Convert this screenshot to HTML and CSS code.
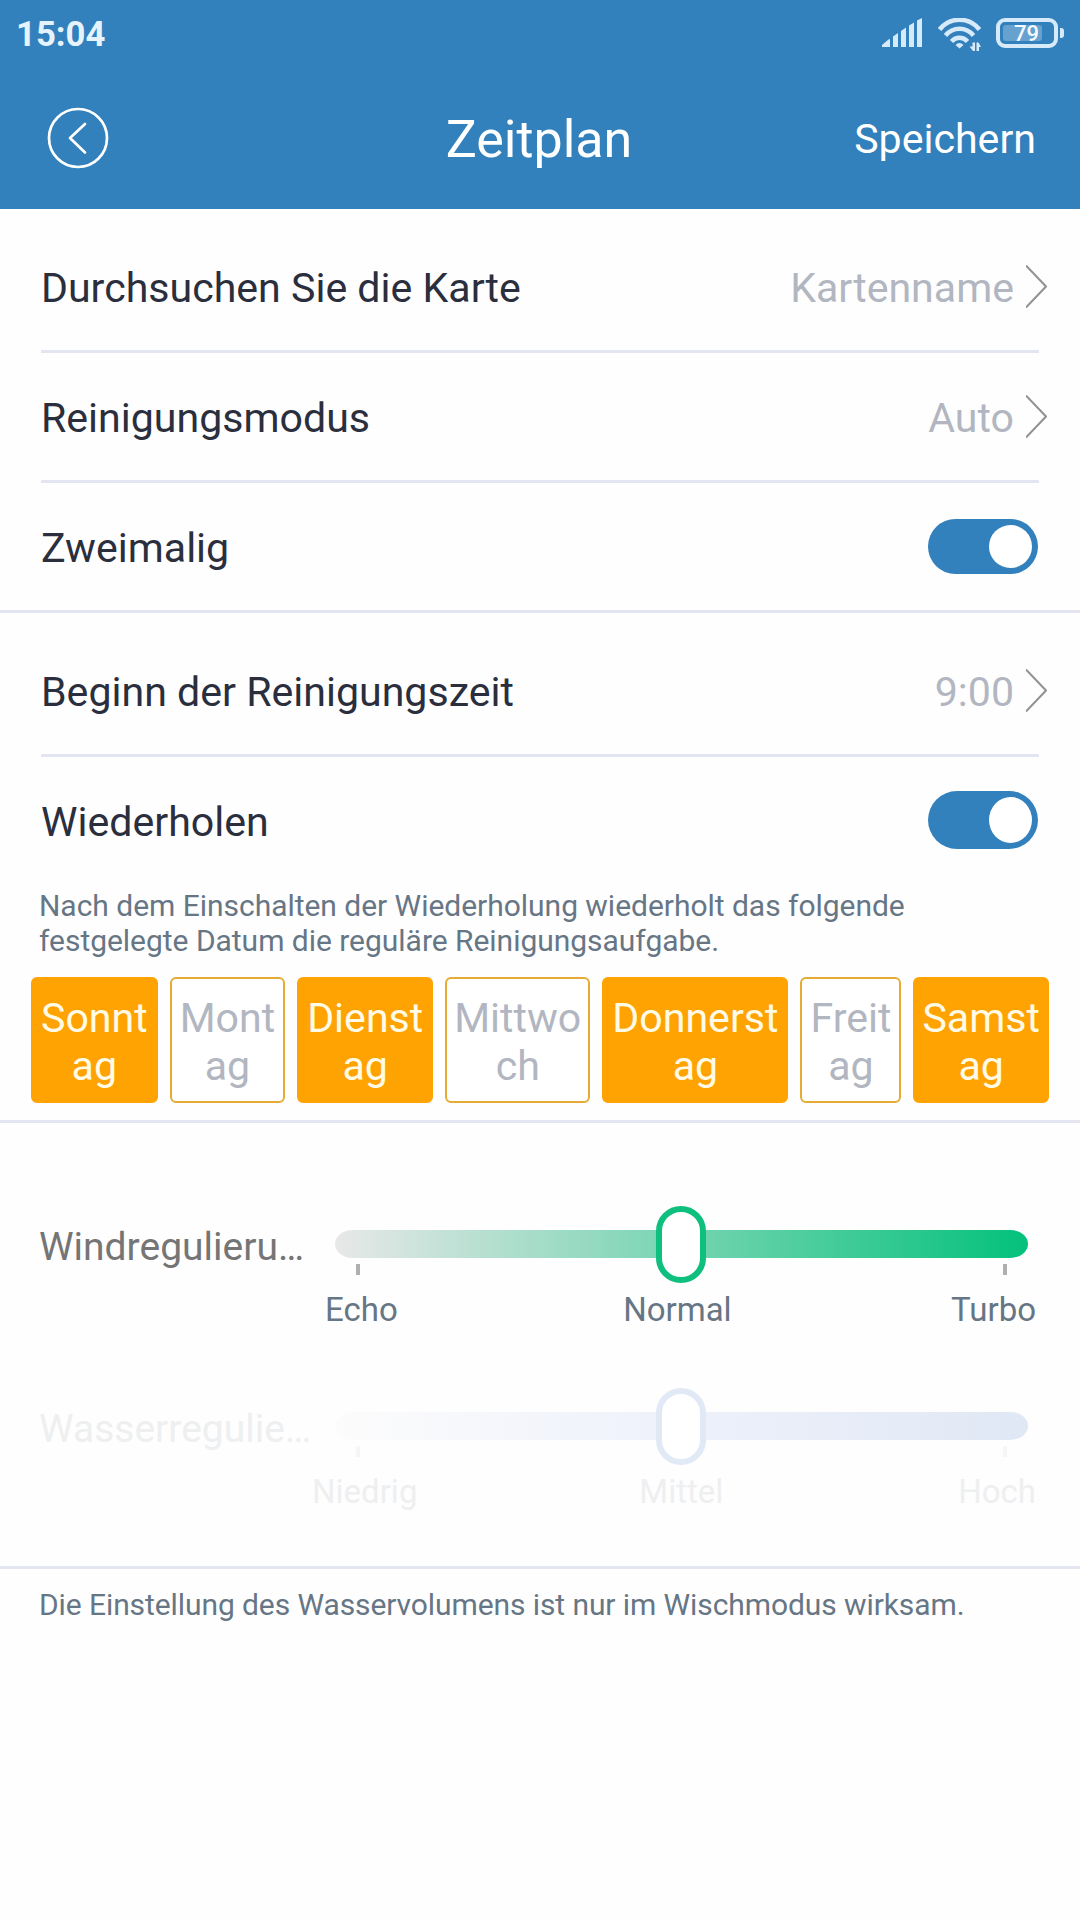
FILE: index.html
```html
<!DOCTYPE html>
<html lang="de">
<head>
<meta charset="utf-8">
<title>Zeitplan</title>
<link rel="stylesheet" href="styles.css">
</head>
<body>
<header class="header">
  <div class="statusbar">
    <span class="clock">15:04</span>
    <div class="status-icons">
      <svg class="signal" width="41" height="30" viewBox="0 0 41 30"><path d="M0 29V27L6.500 21.500Q8 20.500 8 22V29ZM11 29V18.500L16 15V29ZM19 29V13L24 9.500V29ZM27 29V7.500L32 4.500V29ZM35 29V2.500L40 0V29Z"/></svg>
      <svg class="wifi" width="44" height="34" viewBox="0 0 44 34"><path class="arc" d="M1.500 11.500C12 -1.500 31 -1.500 41.500 11.500M7.500 17.500C15 8.500 28 8.500 35.500 17.500M13.500 23.500C18 18.500 25 18.500 29.500 23.500"/><path d="M21.500 30.500L17.500 27Q21.500 23 25.500 27Z"/><path d="M37 24.500V33H35L31.500 28.500H34.500V24.500ZM38.500 33V24.500H40.500L43 29H41V33Z"/></svg>
      <div class="battery"><div class="battery-body"><span class="battery-level">79</span></div><i class="battery-nub"></i></div>
    </div>
  </div>
  <div class="titlebar">
    <svg class="back" width="62" height="62" viewBox="0 0 62 62"><circle cx="31" cy="31" r="29"/><path d="M38 17L23 31L38 45.500"/></svg>
    <h1 class="title">Zeitplan</h1>
    <span class="save">Speichern</span>
  </div>
</header>
<main>
  <section class="group">
    <div class="row"><span class="name">Durchsuchen Sie die Karte</span><span class="value">Kartenname</span><svg class="chevron" width="21" height="43" viewBox="0 0 21 43"><path d="M0 .5L20 21.500L0 42.500"/></svg></div>
    <div class="row"><span class="name">Reinigungsmodus</span><span class="value">Auto</span><svg class="chevron" width="21" height="43" viewBox="0 0 21 43"><path d="M0 .5L20 21.500L0 42.500"/></svg></div>
    <div class="row"><span class="name">Zweimalig</span><span class="toggle"><i class="knob"></i></span></div>
  </section>
  <section class="group">
    <div class="row"><span class="name">Beginn der Reinigungszeit</span><span class="value">9:00</span><svg class="chevron" width="21" height="43" viewBox="0 0 21 43"><path d="M0 .5L20 21.500L0 42.500"/></svg></div>
    <div class="row"><span class="name">Wiederholen</span><span class="toggle toggle-tall"><i class="knob"></i></span></div>
    <p class="hint">Nach dem Einschalten der Wiederholung wiederholt das folgende<br>festgelegte Datum die reguläre Reinigungsaufgabe.</p>
    <div class="days">
      <span class="day on">Sonnt<br>ag</span>
      <span class="day">Mont<br>ag</span>
      <span class="day on">Dienst<br>ag</span>
      <span class="day tight">Mittwo<br>ch</span>
      <span class="day on">Donnerst<br>ag</span>
      <span class="day">Freit<br>ag</span>
      <span class="day on tight">Samst<br>ag</span>
    </div>
  </section>
  <section class="sliders">
    <div class="slider wind">
      <span class="slider-name">Windregulieru…</span>
      <div class="control">
        <div class="rail"><i class="track"></i><i class="thumb"></i></div>
        <div class="ticks"><i class="tick"></i><i class="tick"></i></div>
        <div class="levels"><span>Echo</span><span class="mid">Normal</span><span>Turbo</span></div>
      </div>
    </div>
    <div class="slider water">
      <span class="slider-name">Wasserregulie…</span>
      <div class="control">
        <div class="rail"><i class="track"></i><i class="thumb"></i></div>
        <div class="ticks"><i class="tick"></i><i class="tick"></i></div>
        <div class="levels"><span>Niedrig</span><span class="mid">Mittel</span><span>Hoch</span></div>
      </div>
    </div>
  </section>
  <p class="hint note">Die Einstellung des Wasservolumens ist nur im Wischmodus wirksam.</p>
</main>
</body>
</html>
```
FILE: styles.css
```css
* { box-sizing: border-box; }

body {
  margin: 0;
  min-height: 1920px;
  background: #fefefe;
  font-family: Roboto, "Noto Sans", sans-serif;
  color: #2b2e3d;
}

/* header */
.header { height: 209px; background: #3280bc; color: #fff; }
.statusbar {
  height: 66px;
  padding: 0 16px 0 16px;
  display: flex;
  justify-content: space-between;
  color: #e6f3fd;
}
.clock { padding-top: 14px; font-size: 34.700px; line-height: 40px; font-weight: 700; }
.status-icons { display: flex; align-items: flex-start; padding-top: 18px; fill: #d7eafa; }
.signal { margin-right: 15px; }
.wifi { margin-right: 14px; }
.arc { fill: none; stroke: #d7eafa; stroke-width: 4.500; }
.battery { display: flex; align-items: center; gap: 2px; }
.battery-body {
  width: 62px;
  height: 30px;
  padding: 3px 12px 3px 3px;
  border: 4px solid #d7eafa;
  border-radius: 9px;
}
.battery-level {
  display: block;
  height: 16px;
  padding-left: 11px;
  background: #66a1cf;
  border-radius: 3px;
  color: #f4faff;
  font-size: 22px;
  line-height: 18px;
  font-weight: 500;
}
.battery-nub { width: 4px; height: 10px; border-radius: 0 3px 3px 0; background: #d7eafa; }

.titlebar {
  height: 143px;
  padding: 0 44px 0 46px;
  display: grid;
  grid-template-columns: 198px 1fr 202px;
  align-items: start;
}
.back { margin: 40.500px 0 0 .5px; fill: none; stroke: #fff; stroke-width: 2.700; stroke-linecap: round; stroke-linejoin: round; }
.title { margin: 44px 0 0; font-size: 52px; line-height: 60px; font-weight: 400; text-align: center; }
.save { margin-top: 49px; font-size: 41.100px; line-height: 48px; text-align: right; }

/* setting rows */
.group { padding-top: 14px; border-bottom: 3px solid #e3e6f1; }
.row {
  height: 130px;
  margin: 0 41px;
  display: flex;
  align-items: center;
  border-bottom: 3px solid #e3e6f1;
  font-size: 41.100px;
  line-height: 48px;
}
.row:nth-child(3), .row:has(+ .hint) { height: 127px; border-bottom: 0; }
.name { flex: 1; padding-top: 3px; }
.value { padding-top: 3px; margin-right: 12px; color: #b2b6c1; }
.chevron { margin-right: -8px; fill: none; stroke: #929292; stroke-width: 2; }
.toggle {
  width: 110px;
  height: 55px;
  margin-right: 1px;
  padding: 6px;
  display: flex;
  justify-content: flex-end;
  border-radius: 29px;
  background: #3280bc;
}
.toggle-tall { height: 58px; margin-bottom: 2px; }
.knob { width: 43px; border-radius: 50%; background: #fff; }

.hint {
  margin: 4px 30px 0 39px;
  font-size: 30px;
  line-height: 35px;
  letter-spacing: -.03px;
  color: #677685;
}

/* weekday picker */
.days { display: flex; gap: 12px; padding: 19px 31px 17px; }
.day {
  height: 126px;
  padding: 15px 8px 11px;
  border: 2px solid #e5ab35;
  border-radius: 6px;
  font-size: 41.100px;
  line-height: 48px;
  text-align: center;
  color: #b2b6c1;
  background: #fff;
}
.day.on { border-color: #ffa303; background: #ffa303; color: #fffbe6; }
.day.tight { padding-left: 7px; padding-right: 7px; }

/* sliders */
.sliders { height: 446px; padding: 60px 52px 0 39px; border-bottom: 3px solid #e3e6f1; }
.slider { height: 182px; display: flex; }
.slider-name { width: 296px; padding-top: 41px; font-size: 39px; line-height: 46px; white-space: nowrap; color: #757575; }
.control { flex: 1; padding-top: 23px; }
.rail { height: 77px; display: flex; align-items: center; position: relative; }
.track { flex: 1; height: 28px; margin-top: -1px; border-radius: 18px / 14px; background: linear-gradient(90deg, #e8e8e8, #04c17c); }
.thumb {
  position: absolute;
  left: 321px;
  top: 0;
  width: 50px;
  height: 77px;
  border: 6px solid #0fbf7e;
  border-radius: 25px;
  background: #fff;
}
.ticks { height: 11px; margin-top: -19px; padding: 0 21px; display: flex; justify-content: space-between; }
.tick { width: 4px; background: #b0b0b0; }
.levels { margin: 16px -8px 0 -10px; display: flex; font-size: 33px; line-height: 38px; color: #677685; }
.mid { flex: 1; padding-left: 6px; text-align: center; }

.water .slider-name, .water .levels { color: #eeeff0; }
.water .track { background: linear-gradient(90deg, #fcfcfc, #eff2fb 45%, #e0e8f5); }
.water .thumb { border-color: #e2e9f6; }
.water .tick { background: #f6f6f6; }
.water .levels { margin-left: -23px; }
.water .mid { padding: 0 13px 0 0; }

.note { margin-top: 18px; letter-spacing: -.09px; }
```
